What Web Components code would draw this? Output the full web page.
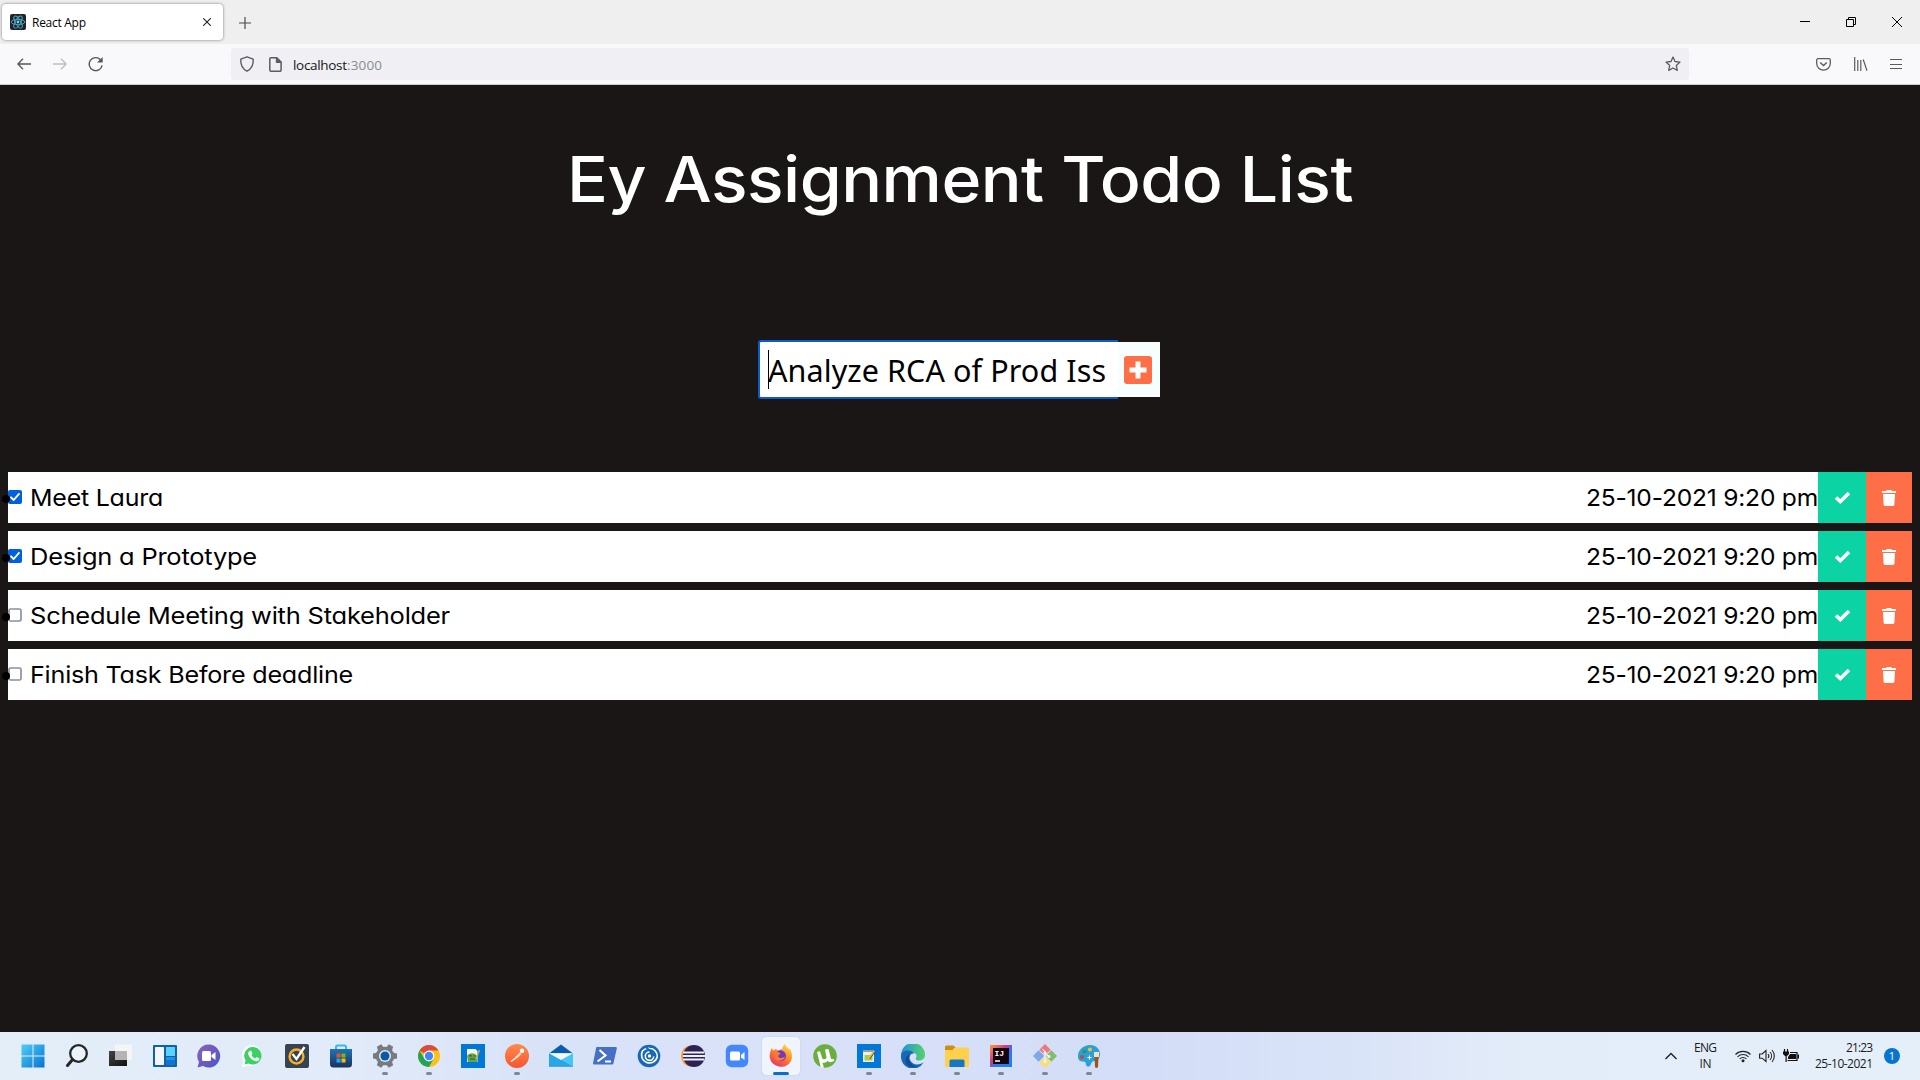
<!DOCTYPE html>
<html lang="en">
<head>
<meta charset="utf-8">
<title>React App</title>
<style>
html,body{margin:0;height:100%;overflow:hidden;background:#1a1615}
body{font-family:"Open Sans","Noto Sans",sans-serif}
</style>
</head>
<body>
<desktop-screen></desktop-screen>
<script>
class Base extends HTMLElement{
  connectedCallback(){
    if(this.shadowRoot)return;
    this.attachShadow({mode:'open'}).innerHTML='<style>*{box-sizing:border-box}svg{display:block}</style>'+this.view();
    this.ready&&this.ready();
  }
}
/* Text spread evenly over a given advance width; "stretch" widens the glyphs instead of the gaps */
customElements.define('fit-text',class extends Base{
  view(){return `<style>:host{display:block;white-space:nowrap;width:${this.getAttribute('w')}px}span{display:inline-block;transform-origin:0 50%}</style><span>${this.getAttribute('text')}</span>`}
  ready(){
    const s=this.shadowRoot.querySelector('span'),n=this.getAttribute('text').length,w=+this.getAttribute('w');
    const nat=s.getBoundingClientRect().width;
    if(this.hasAttribute('stretch'))s.style.transform=`scaleX(${w/nat})`;
    else s.style.letterSpacing=(w-nat)/(n-1)+'px';
  }
});
const chrome={
 react:`<svg width="16" height="16" viewBox="0 0 16 16"><rect width="16" height="16" rx="2" fill="#20232a"/><g fill="none" stroke="#4fa9c2" stroke-width=".9"><ellipse cx="8" cy="8" rx="6.8" ry="2.7"/><ellipse cx="8" cy="8" rx="6.8" ry="2.7" transform="rotate(60 8 8)"/><ellipse cx="8" cy="8" rx="6.8" ry="2.7" transform="rotate(120 8 8)"/></g><circle cx="8" cy="8" r="1.4" fill="#61dafb"/></svg>`,
 close:`<svg width="8" height="8" viewBox="0 0 8 8"><path d="M.3.3l7.4 7.4M7.7.3L.3 7.7" stroke="#222" stroke-width="1.1"/></svg>`,
 plus:`<svg width="12" height="12" viewBox="0 0 12 12"><path d="M6 0v12M0 6h12" stroke="#4a4a52" stroke-width="1.2"/></svg>`,
 min:`<svg width="10" height="10" viewBox="0 0 10 10"><path d="M0 4.5h10" stroke="#000"/></svg>`,
 max:`<svg width="10" height="10" viewBox="0 0 10 10"><path d="M.5 2.5h7v7h-7zM2.5 2.5v-2h7v7h-2" fill="none" stroke="#000"/></svg>`,
 x:`<svg width="10" height="10" viewBox="0 0 10 10"><path d="M0 0l10 10M10 0L0 10" stroke="#000"/></svg>`,
 back:`<svg width="14" height="12" viewBox="0 0 14 12"><path d="M14 6H1M6 .8L.9 6 6 11.2" fill="none" stroke="#55555e" stroke-width="1.3"/></svg>`,
 fwd:`<svg width="14" height="12" viewBox="0 0 14 12"><path d="M0 6h13M8 .8L13.100 6 8 11.200" fill="none" stroke="#bcbcc2" stroke-width="1.3"/></svg>`,
 reload:`<svg width="16" height="16" viewBox="0 0 16 16"><path d="M14.100 9.300A6.500 6.500 0 1 1 12.500 3.700" fill="none" stroke="#55555e" stroke-width="1.4"/><path d="M14.700.9v5.700H9z" fill="#55555e"/></svg>`,
 shield:`<svg width="16" height="16" viewBox="0 0 16 16"><path d="M8 .8l6.200 2.300c.4 5.200-1.200 9.400-6.200 12.100C3 12.500 1.400 8.300 1.800 3.100z" fill="none" stroke="#5b5b66" stroke-width="1.4" stroke-linejoin="round"/></svg>`,
 page:`<svg width="13" height="15" viewBox="0 0 13 15"><path d="M2 .8h5.800l4.300 4.200v8a1.200 1.200 0 0 1-1.200 1.200H2A1.200 1.200 0 0 1 .8 13V2A1.200 1.200 0 0 1 2 .8z" fill="none" stroke="#5b5b66" stroke-width="1.500"/><path d="M7.300.8v4.700h4.800z" fill="#5b5b66" stroke="#5b5b66"/></svg>`,
 star:`<svg width="16" height="16" viewBox="0 0 16 16"><path d="M8 1l2 4.500 5 .6-3.700 3.300 1 5L8 12l-4.300 2.400 1-5L1 6.100l5-.6z" fill="none" stroke="#5b5b66" stroke-width="1.300" stroke-linejoin="round"/></svg>`,
 pocket:`<svg width="15" height="13" viewBox="0 0 15 13"><path d="M2.200.7h10.600c.8 0 1.500.6 1.500 1.400v3.500a6.800 6.600 0 0 1-13.600 0V2.100C.7 1.300 1.400.7 2.200.7z" fill="none" stroke="#5b5b66" stroke-width="1.300"/><path d="M4.200 4.400l3.300 3.200 3.300-3.200" fill="none" stroke="#5b5b66" stroke-width="1.400"/></svg>`,
 lib:`<svg width="14" height="14" viewBox="0 0 14 14"><path d="M.7 0v14M3.800 3v11M6.800 3v11M9.200 2.500L13 13.800" stroke="#5b5b66" stroke-width="1.200" fill="none"/></svg>`,
 menu:`<svg width="12" height="11" viewBox="0 0 12 11"><path d="M0 .5h12M0 5.500h12M0 9.500h12" stroke="#5b5b66" stroke-width="1.200"/></svg>`
};
customElements.define('browser-tabs',class extends Base{
  view(){return `<style>
  :host{display:flex;height:44px;background:#efefef;padding:4px 18px 4px 2px;align-items:flex-start}
  .tab{display:flex;align-items:center;width:221px;height:36px;background:#fff;border-radius:4px;box-shadow:0 0 3px rgba(0,0,0,.5);padding:0 12px 0 8px;gap:6px;font-size:12px;line-height:18px;color:#000}
  .tab fit-text{padding-top:1px}
  .tab .c{margin-left:auto}.new{padding:13px 0 0 16px}.win{display:flex;gap:36px;margin-left:auto;padding:13px 0 0}
  </style><div class="tab">${chrome.react}<fit-text w="54" text="React App"></fit-text><div class="c">${chrome.close}</div></div><div class="new">${chrome.plus}</div><div class="win">${chrome.min+chrome.max+chrome.x}</div>`}
});
customElements.define('browser-toolbar',class extends Base{
  view(){return `<style>
  :host{display:flex;height:41px;background:#f9f9fb;border-bottom:1px solid #ccccd0;padding:0 18px 0 17px;align-items:center}
  .nav{display:flex;gap:22px;align-items:center;width:214px}.nav svg:last-child{margin-left:-1px}
  .url{display:flex;align-items:center;width:1458px;height:32px;background:#f0f0f4;border-radius:4px;padding:0 8px 0 8px;font-size:13.500px;line-height:20px;color:#15141a}
  .url fit-text{padding-top:1px}
  .p{margin:0 11px 0 14px}.port{color:#8b8b92}.s{margin-left:auto}.r{display:flex;margin-left:auto;align-items:center}.r svg+svg{margin-left:23px}.r svg:last-child{margin-left:22px}
  </style><div class="nav">${chrome.back+chrome.fwd+chrome.reload}</div><div class="url">${chrome.shield}<div class="p">${chrome.page}</div><fit-text w="54" text="localhost"></fit-text><fit-text class="port" w="35" text=":3000"></fit-text><div class="s">${chrome.star}</div></div><div class="r">${chrome.pocket+chrome.lib+chrome.menu}</div>`}
});
customElements.define('todo-form',class extends Base{
  view(){return `<style>
  :host{display:flex;width:402px;height:59px;margin:0 0 0 750px;align-items:center}
  .in{position:relative;display:flex;align-items:center;width:360px;height:59px;background:#fff;border:2px solid #0a5bd0;border-right:0;border-radius:3px 0 0 3px;padding:1px 0 0 8px;font:30.500px/56px "Noto Sans",sans-serif;color:#000}
  .in i{position:absolute;left:8px;top:8px;width:1px;height:39px;background:#000}
  .b{display:flex;align-items:center;width:42px;height:55px;background:#f7fffe;padding-left:6px}
  </style><div class="in"><i></i><fit-text w="338" text="Analyze RCA of Prod Iss"></fit-text></div><div class="b"><svg width="28" height="28" viewBox="0 0 28 28"><rect width="28" height="28" rx="3" fill="#ff6f47"/><path d="M14 5.500v17M5.500 14h17" stroke="#fff" stroke-width="5"/></svg></div>`}
});
customElements.define('todo-item',class extends Base{
  view(){const on=this.hasAttribute('done');return `<style>
  :host{position:relative;display:flex;height:51px;background:#fff;color:#000;font:23.500px/51px Inter,sans-serif;letter-spacing:-.2px;font-feature-settings:"cv11","ss03"}
  .dot{position:absolute;left:-6px;top:23px;width:8px;height:8px;border-radius:50%;background:#000}
  .cb{margin:18px 7.500px 0 0;width:14px;height:14px}
  .d{margin-left:auto}.g,.o{display:flex;align-items:center;justify-content:center;width:48px;background:#0bd3a3}.o{width:46px;background:#ff6f47}
  </style><i class="dot"></i><div class="cb"><svg width="14" height="14" viewBox="0 0 14 14">${on?'<rect width="14" height="14" rx="2" fill="#0060df"/><path d="M3 7.300l2.700 2.700L11 3.900" fill="none" stroke="#fff" stroke-width="1.900" stroke-linecap="round" stroke-linejoin="round"/>':'<rect x="1" y="1" width="12" height="12" rx="1.500" fill="#fff" stroke="#8f8f9d" stroke-width="1.700"/>'}</svg></div>
  <fit-text stretch w="${this.getAttribute('w')}" text="${this.getAttribute('text')}"></fit-text><fit-text stretch class="d" w="232" text="25-10-2021 9:20 pm"></fit-text>
  <div class="g"><svg width="17" height="13" viewBox="0 0 17 13"><path d="M2 6.500l4.300 4.100L15 2" fill="none" stroke="#fff" stroke-width="3.600"/></svg></div>
  <div class="o"><svg width="14" height="16" viewBox="0 0 14 16"><path d="M0 1h4l1-1h4l1 1h4v2H0zM1 4h12l-.6 10.500c0 .9-.6 1.500-1.400 1.500H3c-.8 0-1.400-.6-1.400-1.500z" fill="#fff"/></svg></div>`}
});
customElements.define('todo-app',class extends Base{
  view(){return `<style>
  :host{display:flex;flex-direction:column;height:947px;background:#1a1615;padding:54px 8px 0}
  .h{align-self:center;color:#fff;font:500 63.500px/80px Inter,sans-serif;letter-spacing:-.5px;font-feature-settings:"cv11","ss03";margin-bottom:121px}
  .l{display:flex;flex-direction:column;gap:8px;margin-top:73px}
  </style><fit-text stretch class="h" w="786" text="Ey Assignment Todo List"></fit-text><todo-form></todo-form><div class="l">
  <todo-item done w="133" text="Meet Laura"></todo-item><todo-item done w="227" text="Design a Prototype"></todo-item><todo-item w="420" text="Schedule Meeting with Stakeholder"></todo-item><todo-item w="323" text="Finish Task Before deadline"></todo-item></div>`}
});
const ic={
 win:`<defs><linearGradient id="a" x2="1" y2="1"><stop stop-color="#4fcdf8"/><stop offset="1" stop-color="#0874cf"/></linearGradient></defs><path d="M.5.500h11v11h-11zM12.500.500h11v11h-11zM.5 12.500h11v11h-11zM12.500 12.500h11v11h-11z" fill="url(#a)"/>`,
 search:`<circle cx="13.500" cy="9.500" r="8.300" fill="#ffffff55" stroke="#262626" stroke-width="2.300"/><path d="M7.600 15.600L2.500 21.500" stroke="#262626" stroke-width="3" stroke-linecap="round"/>`,
 task:`<defs><linearGradient id="a" x2="1" y2="1"><stop stop-color="#444"/><stop offset="1" stop-color="#111"/></linearGradient></defs><path d="M0 7h18v15H0z" fill="url(#a)"/><path d="M6 .5h17v15.500H6z" fill="#f5f5f5"/><path d="M6 7h12v9H6z" fill="#b4b4b4"/>`,
 widg:`<rect width="24" height="22" y="1" rx="1" fill="#0f62a8"/><rect x="2" y="3" width="9" height="18" rx=".7" fill="#f3f6fa"/><path d="M13 3h9v9h-9z" fill="#5bd2fa"/><path d="M13 13h9v3h-9z" fill="#1a94e6"/><path d="M13 16h9v5h-9z" fill="#1076d2"/>`,
 chat:`<defs><linearGradient id="a" x2="1" y2="1"><stop stop-color="#8a62b8"/><stop offset="1" stop-color="#4b55cc"/></linearGradient></defs><path d="M12 .5A11.500 11.500 0 1 1 6 22L.5 23.500 2 18A11.500 11.500 0 0 1 12 .5z" fill="url(#a)"/><rect x="5" y="7" width="9" height="10" rx="1.500" fill="#fff"/><path d="M14.500 11L18.500 8v8l-4-3z" fill="#fff"/>`,
 wa:`<path d="M12.500 1A10.500 10.500 0 1 1 7 21.500L1 23l1.600-6A10.500 10.500 0 0 1 12.500 1z" fill="#fff"/><path d="M12.500 3A8.800 8.800 0 1 1 7.500 19.500L3.500 20.500l1.100-4A8.800 8.800 0 0 1 12.500 3z" fill="#3bd164"/><path d="M8.500 7l1.500-.5 1.500 3-1 1.500c.8 1.700 2 2.800 3.700 3.500l1.300-1.400 3 1.400c-.1 2.500-2.200 3.200-4.200 2.500-3.700-1.200-6-3.600-7-6.500-.5-1.600.2-3 1.200-3.500z" fill="#fff"/>`,
 norton:`<rect width="24" height="24" rx="2" fill="#354451"/><circle cx="11.500" cy="12.500" r="6.900" fill="none" stroke="#f8ae2a" stroke-width="2.500"/><path d="M7.500 10l4 5L19.500 3" fill="none" stroke="#fff" stroke-width="2.300"/>`,
 store:`<defs><linearGradient id="a" x2="0" y2="1"><stop stop-color="#1d74b8"/><stop offset="1" stop-color="#1a335c"/></linearGradient></defs><path d="M7 6V3c0-1 .6-1.500 1.500-1.500h7c.9 0 1.500.5 1.500 1.500v3" fill="none" stroke="#36bce4" stroke-width="2"/><path d="M1 5h22v15a3.500 3.500 0 0 1-3.500 3.500h-15A3.500 3.500 0 0 1 1 20z" fill="url(#a)"/><path d="M7.500 9.500h4v4h-4z" fill="#f25022"/><path d="M12.500 9.500h4v4h-4z" fill="#7fba00"/><path d="M7.500 14.500h4v4h-4z" fill="#1da8ef"/><path d="M12.500 14.500h4v4h-4z" fill="#ffb900"/>`,
 gear:`<g fill="#757b81"><circle cx="12" cy="12" r="9.300"/><path d="M9.500 0h5l.8 4h-6.600z" transform="rotate(30 12 12)"/><path d="M9.500 0h5l.8 4h-6.600z" transform="rotate(90 12 12)"/><path d="M9.500 0h5l.8 4h-6.600z" transform="rotate(150 12 12)"/><path d="M9.500 0h5l.8 4h-6.600z" transform="rotate(210 12 12)"/><path d="M9.500 0h5l.8 4h-6.600z" transform="rotate(270 12 12)"/><path d="M9.500 0h5l.8 4h-6.600z" transform="rotate(330 12 12)"/></g><circle cx="12" cy="12" r="6" fill="#e5eaf0"/><circle cx="12" cy="12" r="4.500" fill="#0a5aa8"/>`,
 chrome:`<circle cx="12" cy="12" r="11" fill="#fbc116"/><path d="M12 12L2.500 6.500A11 11 0 0 1 21.500 6.500H12z" fill="#dd4b3e"/><path d="M2.500 6.500A11 11 0 0 0 12 23l4.700-8.500L12 12 7.300 14.500z" fill="#22a25a"/><circle cx="12" cy="12" r="5.400" fill="#fff"/><circle cx="12" cy="12" r="4.200" fill="#4285f4"/>`,
 npp:`<path d="M0 0h24v24H0z" fill="#0078d7"/><path d="M6 5h8.500l2 2v11H6z" fill="#f4f4e8"/><path d="M6 12c2-3 7-4 10 0v6H7z" fill="#65a84c"/><path d="M8.500 11h2v1.500h-2zM12.500 11.500h2v1h-2z" fill="#25552c"/><path d="M9 15h5" stroke="#25552c"/><path d="M18.500 6l-3.500 9" stroke="#c9ad44" stroke-width="1.500"/>`,
 postman:`<defs><linearGradient id="a" x2="0" y2="1"><stop stop-color="#ff8a4f"/><stop offset="1" stop-color="#f7552e"/></linearGradient></defs><circle cx="12" cy="12" r="12" fill="url(#a)"/><path d="M6 17.500l6-4.500 3.500-4" fill="none" stroke="#fff" stroke-width="1.500"/><path d="M10 13l5-4.500 1.500 1.500-4.500 4.500z" fill="#ffd5c5"/><circle cx="17" cy="6.800" r="2.200" fill="#fff"/>`,
 mail:`<path d="M0 9.500L12 .5l12 9v13H0z" fill="#0b5dac"/><path d="M0 9h24v13.500H0z" fill="#48c6f3"/><path d="M0 9l24 13.500H0z" fill="#2aa6e6"/><path d="M0 9.300h24L12 16z" fill="#f5f9fc"/>`,
 ps:`<path d="M4 3h18.500c1 0 1.500.6 1.300 1.500L20.500 19c-.2 1-.8 1.500-1.800 1.500H1.300c-1 0-1.500-.6-1.200-1.500L3 4.500C3 3.600 3.300 3 4 3z" fill="#4670c5"/><path d="M6.500 6l6 5.500-8 6M12 17.500h6" fill="none" stroke="#fff" stroke-width="2.100"/>`,
 swirl:`<circle cx="12" cy="12" r="11.300" fill="#1768b5"/><circle cx="12.500" cy="12" r="1.700" fill="#fff"/><path d="M12.500 8A4.200 4.200 0 1 0 16.700 12.500M5.500 7A8 8 0 1 0 20.300 12.500M5.500 7A8.500 8.500 0 0 1 12.500 4.300A8 8 0 0 1 20.300 12.500" fill="none" stroke="#fff" stroke-width="1.600"/><path d="M8 2.500L16 9" stroke="#1768b5" stroke-width="1.800"/>`,
 ecl:`<ellipse cx="10" cy="12" rx="10" ry="10.500" fill="#f39a2d"/><ellipse cx="13" cy="12" rx="11" ry="11" fill="#2c2255"/><path d="M2 8.500h21M2 12h22M2 15.500h21" stroke="#f0effa" stroke-width="1.800"/>`,
 zoom:`<rect x=".8" y=".8" width="22.400" height="22.400" rx="6" fill="#4487fb"/><rect x="5" y="7.500" width="10" height="9" rx="1.500" fill="#fff"/><path d="M16 11l3.500-3v8L16 13.500z" fill="#fff"/>`,
 ff:`<defs><linearGradient id="a" x1=".8" x2=".2" y2="1"><stop stop-color="#ffde3f"/><stop offset=".45" stop-color="#ff8a2b"/><stop offset="1" stop-color="#e82a6c"/></linearGradient></defs><path d="M16 0c.5 2 1.800 3 3.800 5l1.500.5c2 4 2.200 8 .7 11.500A11.500 11.500 0 0 1 .7 13C.4 9 2 5.500 3 4l1 2.500L7 5l2 1.500c2-1 4-1.500 4.500-1.500C13.500 3 14.500 1 16 0z" fill="url(#a)"/><circle cx="11.500" cy="11.800" r="5.500" fill="#7138c8"/><path d="M5 8c3-.5 5 0 6.500 1.500L9 12c1 3 5 2 7 .5-1 5-8 6-10.500 1.500C4.500 12 4.500 10 5 8z" fill="#ff7a2c"/>`,
 ut:`<circle cx="12" cy="12" r="11.800" fill="#6aaf3d"/><path d="M4 8l3-.8 2.200 7c.7 2 4.800 1 4.300-1.300L12 5.500l3.500-.5 2.300 9c.4 1.500 1.500 1.200 3 1l.5 2c-3 1.600-5.500 1.500-6.700-.2-1.500 2-3.600 2.400-5.200 1.700l1.500 5-3 .3z" fill="#fff"/>`,
 npad:`<path d="M0 0h24v24H0z" fill="#0078d7"/><path d="M6 6h11v12H6z" fill="#eeefe8"/><path d="M6 6h11v2H6z" fill="#9c9c90"/><path d="M7.500 11h8v5.500h-8z" fill="#a5cf4e"/><path d="M17.500 7L12 14.500" stroke="#e6b838" stroke-width="2"/><path d="M18.300 7.500l-5.500 7.500" stroke="#333" stroke-width=".8"/>`,
 edge:`<defs><linearGradient id="a"><stop stop-color="#218fdc"/><stop offset="1" stop-color="#55d568"/></linearGradient></defs><path d="M0 12A12 12 0 0 1 24 10c.5 4-2 6.500-6 6.500-3 0-3.500-1.500-3-2.500 2-4-2-6-5-6-4 0-7.500 2-10 4z" fill="url(#a)"/><path d="M0 12C1 5.500 10 5 13.500 9.500 9 9 7.500 12.500 9 16c2 4.500 8 6 13.500 2.500A12 12 0 0 1 0 12z" fill="#1769b5"/><path d="M9.500 10.500c-3.500 3.500-.500 11.500 6.500 12-7 2.500-12-2-11.500-7 .3-3 2.500-4.500 5-5z" fill="#164a91"/>`,
 fold:`<path d="M0 3a1.500 1.500 0 0 1 1.500-1.500h7L11 4h-2L8 6H0z" fill="#d08b12"/><path d="M0 6h8l2-2.500h13.500c.5 0 .5.500.5 1V22a1 1 0 0 1-1 1H1a1 1 0 0 1-1-1z" fill="#ffd04b"/><path d="M4.500 23v-6a1.500 1.500 0 0 1 1.500-1.500h12A1.500 1.500 0 0 1 19.500 17v6z" fill="#1377c4"/>`,
 ij:`<defs><linearGradient id="a" x2="1" y2="1"><stop stop-color="#ff9a33"/><stop offset=".4" stop-color="#c93b88"/><stop offset=".6" stop-color="#297bf0"/><stop offset="1" stop-color="#1682f3"/></linearGradient></defs><path d="M1 1h22v22H1z" fill="url(#a)"/><path d="M4 4h16v16H4z" fill="#130410"/><text x="5.500" y="12.200" font-family="Liberation Mono,monospace" font-weight="bold" font-size="8" fill="#fff">IJ</text><path d="M6 17h5" stroke="#fff" stroke-width="1.500"/>`,
 git:`<g transform="rotate(45 12 12)"><path d="M3.500 3.500h8v8h-8z" fill="#ee797d"/><path d="M12.500 3.500h8v8h-8z" fill="#82bd67"/><path d="M3.500 12.500h8v8h-8z" fill="#7ea7ee"/><path d="M12.500 12.500h8v8h-8z" fill="#fbdc6f"/></g><path d="M12 8v10M12 9l4 4M9.500 5l2.500 3" stroke="#f4f5fb" stroke-width="1.100"/><circle cx="12" cy="8.500" r="1.500" fill="#f4f5fb"/><circle cx="16" cy="12.500" r="1.500" fill="#f4f5fb"/><circle cx="12" cy="17.500" r="1.500" fill="#f4f5fb"/>`,
 paint:`<path d="M13 1c6 0 10 4 10 9.500 0 4-3 6.500-5.500 6.500-2 0-3 1-3.500 3-.7 3-4 3.500-5 1 0-2-.5-3.500-3-3.500C2 17.500 1 15 1 12 1 6 6.500 1 13 1z" fill="#2b9fd8"/><circle cx="5" cy="13" r="2" fill="#c44936"/><circle cx="7.500" cy="7.500" r="2.100" fill="#2d9951"/><circle cx="13" cy="5.500" r="2" fill="#f2c32b"/><path d="M12.500 11.500v4M10.500 13.500h4" stroke="#fff" stroke-width="1.200"/><path d="M17 8h5v5h-5z" fill="#f5e1bd"/><path d="M17.500 13h4l-.5 10c-.5 1.300-2.500 1.300-3 0z" fill="#9a571e"/>`
};
customElements.define('task-icon',class extends Base{
  view(){const r=this.getAttribute('run');return `<style>
  :host{display:flex;flex-direction:column;align-items:center;width:44px;height:48px;padding-top:5px}
  .b{display:flex;flex-direction:column;align-items:center;width:38px;height:38px;padding-top:7px;border-radius:4px;${r=='active'?'background:#f0f4fc;box-shadow:0 0 1px #9aa8c5':''}}
  i{display:block;flex:none;width:${r=='active'?16:6}px;height:3px;border-radius:2px;margin-top:4px;background:${r=='active'?'#0671cc':r?'#81868f':'transparent'}}
  </style><div class="b"><svg width="24" height="24" viewBox="0 0 24 24">${ic[this.getAttribute('name')]}</svg><i></i></div>`}
});
customElements.define('system-tray',class extends Base{
  view(){return `<style>
  :host{display:flex;align-items:center;margin-left:auto;color:#1b1b1b;font-size:12px;line-height:16px;padding-right:20px}
  .l{margin:0 18px 0 17px;display:flex;flex-direction:column;align-items:center}.t{display:flex;flex-direction:column;align-items:flex-end;margin:0 11px 0 15px}
  .n{display:flex;align-items:center;justify-content:center;width:16px;height:16px;border-radius:50%;background:#0874cf;color:#fff;font-size:11px}
  .s{display:flex;gap:8px}
  </style><svg width="12" height="8" viewBox="0 0 12 8"><path d="M.5 7L6 1.500 11.500 7" fill="none" stroke="#222" stroke-width="1.400"/></svg>
  <div class="l"><fit-text w="23" text="ENG"></fit-text><fit-text w="12" text="IN"></fit-text></div><div class="s">
  <svg width="16" height="14" viewBox="0 0 16 14"><path d="M.5 5.500a10.500 10.500 0 0 1 15 0M2.500 7.800a7.800 7.800 0 0 1 11 0M4.700 9.900a4.600 4.600 0 0 1 6.600 0" fill="none" stroke="#222" stroke-width="1.100"/><circle cx="8" cy="11.800" r="1.500" fill="#222"/></svg>
  <svg width="16" height="14" viewBox="0 0 16 14"><path d="M.6 5h2.600L7 1.500v11L3.200 9.200H.6z" fill="none" stroke="#222" stroke-width="1.100"/><path d="M9 5a3 3 0 0 1 0 4M11 3a6 6 0 0 1 0 8M13 1a9 9 0 0 1 0 12" fill="none" stroke="#222" stroke-width="1.100"/></svg>
  <svg width="17" height="14" viewBox="0 0 17 14"><path d="M1.500 0v3M4.500 0v3" stroke="#111" stroke-width="1.200"/><path d="M0 2.500h6v2.500L4 7H2L0 5zM2.500 6h1.200v7H2.500z" fill="#111"/><path d="M7 3.500h7v8H4.500" fill="none" stroke="#111" stroke-width="1.200"/><path d="M7 5h6v5H5V8zM14.500 5.500H16v4h-1.500z" fill="#111"/></svg></div>
  <div class="t"><fit-text w="27" text="21:23"></fit-text><fit-text w="58" text="25-10-2021"></fit-text></div><div class="n">1</div>`}
});
customElements.define('task-bar',class extends Base{
  view(){const a='win search task widg chat wa norton store gear* chrome* npp postman* mail ps swirl ecl zoom ff! ut npad* edge* fold* ij* git* paint*'.split(' ');
  return `<style>:host{display:flex;height:48px;padding-left:11px;background:linear-gradient(90deg,#e3eef8 0,#e1ebf9 17%,#d9e3f8 28%,#d8e1f8 42%,#d3ddf7 60%,#d9e3f8 70%,#e3edf9 80%,#e4effa)}</style>`+a.map(n=>`<task-icon name="${n.replace(/[*!]/,'')}" ${n.endsWith('!')?'run="active"':n.endsWith('*')?'run="yes"':''}></task-icon>`).join('')+'<system-tray></system-tray>'}
});
customElements.define('desktop-screen',class extends Base{
  view(){return `<style>:host{display:flex;flex-direction:column;width:1920px;height:1080px}</style><browser-tabs></browser-tabs><browser-toolbar></browser-toolbar><todo-app></todo-app><task-bar></task-bar>`}
});
</script>
</body>
</html>
